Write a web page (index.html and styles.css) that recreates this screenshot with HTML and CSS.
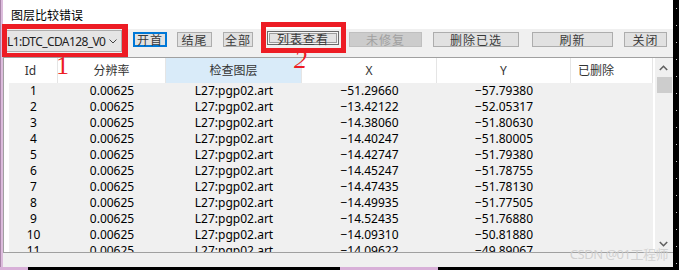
FILE: index.html
```html
<!DOCTYPE html>
<html lang="zh-CN">
<head>
<meta charset="utf-8">
<title>图层比较错误</title>
<link rel="stylesheet" href="styles.css">
</head>
<body>
<div class="screen">
  <div class="left-strip"></div>
  <div class="window">
    <div class="titlebar">图层比较错误</div>
    <div class="toolbar">
      <div class="combo-wrap">
        <div class="combo">
          <span class="combo-text">L1:DTC_CDA128_V0</span>
          <svg class="chev" width="8" height="5" viewBox="0 0 8 5"><path d="M0.5 0.5 L4 4 L7.5 0.5" fill="none" stroke="#444" stroke-width="1"/></svg>
        </div>
        <div class="mark mark-combo"></div>
      </div>
      <button class="btn btn-default b-first">开首</button>
      <button class="btn b-last">结尾</button>
      <button class="btn b-all">全部</button>
      <div class="btn-wrap b-list-wrap">
        <button class="btn btn-pressed b-list">列表查看</button>
        <div class="mark mark-list"></div>
      </div>
      <button class="btn btn-disabled b-unfixed">未修复</button>
      <button class="btn b-delete">删除已选</button>
      <button class="btn b-refresh">刷新</button>
      <button class="btn b-close">关闭</button>
    </div>
    <div class="list">
      <div class="grid">
        <div class="header">
          <div class="hcell">Id</div>
          <div class="hcell">分辨率</div>
          <div class="hcell hcell-active">检查图层</div>
          <div class="hcell">X</div>
          <div class="hcell">Y</div>
          <div class="hcell hcell-left">已删除</div>
        </div>
        <div class="rows">
          <div class="row"><span>1</span><span>0.00625</span><span>L27:pgp02.art</span><span>−51.29660</span><span>−57.79380</span><span></span></div>
          <div class="row"><span>2</span><span>0.00625</span><span>L27:pgp02.art</span><span>−13.42122</span><span>−52.05317</span><span></span></div>
          <div class="row"><span>3</span><span>0.00625</span><span>L27:pgp02.art</span><span>−14.38060</span><span>−51.80630</span><span></span></div>
          <div class="row"><span>4</span><span>0.00625</span><span>L27:pgp02.art</span><span>−14.40247</span><span>−51.80005</span><span></span></div>
          <div class="row"><span>5</span><span>0.00625</span><span>L27:pgp02.art</span><span>−14.42747</span><span>−51.79380</span><span></span></div>
          <div class="row"><span>6</span><span>0.00625</span><span>L27:pgp02.art</span><span>−14.45247</span><span>−51.78755</span><span></span></div>
          <div class="row"><span>7</span><span>0.00625</span><span>L27:pgp02.art</span><span>−14.47435</span><span>−51.78130</span><span></span></div>
          <div class="row"><span>8</span><span>0.00625</span><span>L27:pgp02.art</span><span>−14.49935</span><span>−51.77505</span><span></span></div>
          <div class="row"><span>9</span><span>0.00625</span><span>L27:pgp02.art</span><span>−14.52435</span><span>−51.76880</span><span></span></div>
          <div class="row"><span>10</span><span>0.00625</span><span>L27:pgp02.art</span><span>−14.09310</span><span>−50.81880</span><span></span></div>
          <div class="row"><span>11</span><span>0.00625</span><span>L27:pgp02.art</span><span>−14.09622</span><span>−49.89067</span><span></span></div>
        </div>
      </div>
      <div class="scrollbar">
        <div class="sb-btn sb-up"><svg width="9" height="6" viewBox="0 0 9 6"><path d="M0.8 5 L4.5 1.3 L8.2 5" fill="none" stroke="#606060" stroke-width="1.6"/></svg></div>
        <div class="sb-thumb"></div>
        <div class="sb-track"></div>
        <div class="sb-btn sb-down"><svg width="9" height="6" viewBox="0 0 9 6"><path d="M0.8 1 L4.5 4.7 L8.2 1" fill="none" stroke="#606060" stroke-width="1.6"/></svg></div>
      </div>
    </div>
    <div class="status"></div>
  </div>
  <div class="right-strip"></div>
</div>
<div class="bottom-strip"></div>
<span class="anno anno-1">1</span>
<span class="anno anno-2">2</span>
<div class="watermark">CSDN @01工程师</div>
</body>
</html>
```
FILE: styles.css
```css
* { box-sizing: border-box; }
html, body { margin: 0; padding: 0; }
body {
  width: 679px;
  height: 270px;
  overflow: hidden;
  background: #000;
  position: relative;
  font-family: "Noto Sans", "Noto Sans CJK SC", sans-serif;
  font-size: 12px;
  color: #000;
}
.screen { display: flex; height: 267px; }
.left-strip {
  width: 3px;
  background: #dcbcdc;
  border-left: 1px solid #a884a8;
}
.window {
  width: 670px;
  background: #f0f0f0;
  display: flex;
  flex-direction: column;
}
.right-strip {
  flex: 1;
  background: #000 repeating-linear-gradient(to bottom, #d0d0d0 0 1px, transparent 1px 17px) no-repeat 3px 8px / 1px 100%;
}
.bottom-strip {
  height: 3px;
  background: linear-gradient(to right, #d8b0d8 0 28px, #000 28px 340px, #d8b0d8 340px 438px, #000 438px);
}
.titlebar {
  height: 29px;
  background: #fff;
  padding-left: 8px;
  line-height: 29px;
  font-family: "Noto Sans CJK SC", sans-serif;
  font-size: 12px;
  color: #000;
}
.toolbar {
  height: 28px;
  display: flex;
  align-items: flex-start;
}
.combo-wrap { position: relative; margin: 1px 0 0 2px; }
.combo {
  width: 117px;
  height: 22px;
  background: #e5e5e5;
  border: 1px solid #adadad;
  display: flex;
  align-items: center;
  justify-content: space-between;
  padding: 0 4px 0 1px;
}
.combo-text {
  font-family: "Noto Sans", sans-serif;
  font-size: 12px;
  letter-spacing: -0.6px;
  color: #222;
}
.chev { display: block; }
.mark {
  position: absolute;
  border: 5px solid #ed1c24;
  pointer-events: none;
}
.mark-combo { left: -3px; top: -6px; width: 126px; height: 33px; border-width: 5px 6px 4px 5px; }
.btn-wrap { position: relative; }
.mark-list { left: -6px; top: -9px; width: 85px; height: 31px; }
.btn {
  height: 15px;
  margin: 3px 0 0 0;
  padding: 0;
  background: #e1e1e1;
  border: 1px solid #adadad;
  font-family: "Noto Sans CJK SC", sans-serif;
  font-size: 12px;
  line-height: 13px;
  color: #3a3a3a;
  letter-spacing: 1px;
  display: flex;
  align-items: center;
  justify-content: center;
}
.btn-default { border: 2px solid #0078d7; }
.btn-pressed {
  margin: 0;
  height: 14px;
  border: 1px solid #6a6a6a;
  box-shadow: inset 0 0 0 1px #f4f4f4, inset 0 0 0 2px #9c9c9c;
  background: #e3e3e3;
}
.btn-disabled { background: #cccccc; border-color: #bfbfbf; color: #a0a0a0; }
.b-first { margin-left: 11px; width: 34px; }
.b-last { margin-left: 10px; width: 35px; }
.b-all { margin-left: 11px; width: 30px; }
.b-list-wrap { margin: 2px 0 0 14px; }
.b-list { width: 72px; }
.b-unfixed { margin-left: 10px; width: 73px; }
.b-delete { margin-left: 11px; width: 86px; }
.b-refresh { margin-left: 13px; width: 81px; }
.b-close { margin-left: 11px; width: 43px; }

.list {
  display: flex;
  height: 196px;
  border-top: 1px solid #a0a0a0;
  border-bottom: 1px solid #a0a0a0;
}
.grid {
  width: 652px;
  background: #fff;
  border-left: 1px solid #a0a0a0;
  display: flex;
  flex-direction: column;
}
.header {
  height: 25px;
  display: grid;
  grid-template-columns: 54px 108px 136px 135px 134px 82px;
}
.hcell {
  border-right: 1px solid #e5e5e5;
  text-align: center;
  line-height: 25px;
  color: #333;
  font-size: 12px;
}
.hcell-active { background: #d9ebf9; }
.hcell-left { text-align: left; padding-left: 7px; }
.rows { flex: 1; overflow: hidden; }
.row {
  margin-left: 5px;
  width: 644px;
  height: 16px;
  display: grid;
  grid-template-columns: 49px 108px 136px 135px 134px 82px;
  background: #f0f0f0;
  line-height: 16px;
  text-align: center;
  color: #000;
  font-size: 12px;
}
.scrollbar {
  width: 17px;
  background: #f0f0f0;
  display: flex;
  flex-direction: column;
}
.sb-btn { display: flex; align-items: center; justify-content: center; }
.sb-btn svg { display: block; }
.sb-up { height: 19px; }
.sb-thumb { height: 16px; margin: 0 0 0 2px; background: #cdcdcd; }
.sb-track { flex: 1; }
.sb-down { height: 17px; }
.status { height: 14px; background: #f0f0f0; }

.anno {
  position: absolute;
  font-family: "Liberation Serif", serif;
  font-size: 26px;
  line-height: 26px;
  color: #ed1c24;
}
.anno-1 { left: 56px; top: 53px; }
.anno-2 { left: 294px; top: 47px; font-style: italic; }
.watermark {
  position: absolute;
  right: 11px;
  top: 246px;
  font-family: "Noto Sans", "Noto Sans CJK SC", sans-serif;
  font-size: 13px;
  line-height: 16px;
  letter-spacing: -0.5px;
  color: rgba(205, 205, 205, 0.9);
}
```
